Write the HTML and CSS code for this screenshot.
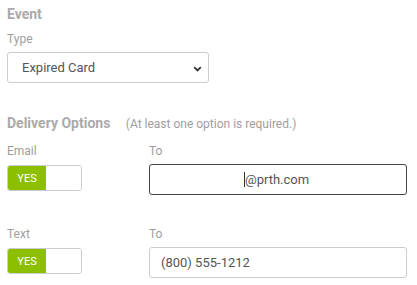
FILE: index.html
```html
<!DOCTYPE html>
<html lang="en">
<head>
  <meta charset="UTF-8" />
  <title>Event Delivery</title>
  <link rel="stylesheet" href="styles.css">
</head>
<body>
  <div class="form">
    <h3 class="heading">Event</h3>
    <label class="label">Type</label>
    <div class="select">
      <span>Expired Card</span>
      <svg class="chevron" width="9" height="6" viewBox="0 0 9 6"><path d="M1.2 1.2 L4.5 4.4 L7.8 1.2" fill="none" stroke="#333" stroke-width="1.8"/></svg>
    </div>

    <h3 class="heading delivery">Delivery Options <span class="note">(At least one option is required.)</span></h3>

    <div class="row">
      <div class="col-toggle">
        <label class="label">Email</label>
        <div class="toggle"><span class="on">YES</span><span class="off"></span></div>
      </div>
      <div class="col-input">
        <label class="label">To</label>
        <div class="input focused"><span class="caret"></span>@prth.com</div>
      </div>
    </div>

    <div class="row second">
      <div class="col-toggle">
        <label class="label">Text</label>
        <div class="toggle"><span class="on">YES</span><span class="off"></span></div>
      </div>
      <div class="col-input">
        <label class="label">To</label>
        <div class="input phone">(800) 555-1212</div>
      </div>
    </div>
  </div>
</body>
</html>
```

FILE: styles.css
```css
body {
  margin: 0;
  background: #fff;
  font-family: Roboto, "Liberation Sans", sans-serif;
  color: #555;
}
.form { padding: 5px 7px 0 7px; }
.heading {
  margin: 0;
  font-size: 14px;
  font-weight: 700;
  line-height: 18px;
  color: #aaa;
}
.label {
  display: block;
  font-size: 12px;
  line-height: 14px;
  color: #9e9e9e;
}
.heading + .label { margin-top: 9px; }
.select {
  margin-top: 6px;
  width: 202px;
  height: 31px;
  box-sizing: border-box;
  border: 1px solid #ccc;
  border-radius: 3px;
  display: flex;
  align-items: center;
  justify-content: space-between;
  padding: 0 6px 0 14px;
  font-size: 13px;
  color: #555;
}
.chevron { margin-top: 2px; }
.delivery { margin-top: 31px; }
.note {
  font-size: 12px;
  font-weight: 400;
  color: #9e9e9e;
  margin-left: 12px;
}
.row { display: flex; margin-top: 11px; }
.row.second { margin-top: 32px; }
.col-toggle { width: 142px; }
.col-input { width: 258px; }
.toggle {
  margin-top: 7px;
  width: 75px;
  height: 26px;
  box-sizing: border-box;
  border: 1px solid #ccc;
  border-radius: 3px;
  display: flex;
  overflow: hidden;
}
.toggle .on {
  width: 38px;
  background: #8cbf00;
  color: #fff;
  font-size: 11px;
  display: flex;
  align-items: center;
  justify-content: center;
}
.toggle .off { flex: 1; background: #fff; }
.input {
  margin-top: 6px;
  height: 31px;
  box-sizing: border-box;
  border: 1px solid #ccc;
  border-radius: 3px;
  display: flex;
  align-items: center;
  padding-left: 11px;
  font-size: 13px;
  color: #555;
}
.input.focused {
  border-color: #444;
  padding-left: 94px;
}
.caret {
  display: inline-block;
  width: 1px;
  height: 15px;
  background: #333;
}
```
